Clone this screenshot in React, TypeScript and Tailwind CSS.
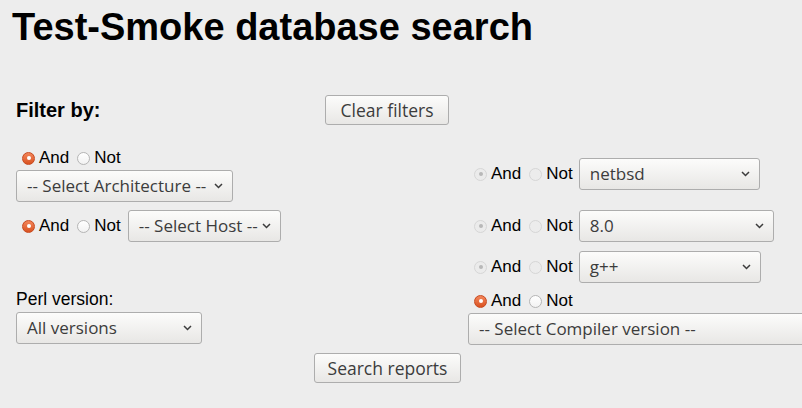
import React from "react";

type RadioState = "on" | "off" | "disabledOn" | "disabledOff";

function Radio({ state }: { state: RadioState }) {
  if (state === "on") {
    return (
      <span className="w-[13px] h-[13px] rounded-full border border-[#c7491f] bg-gradient-to-b from-[#f3865a] to-[#d9521f] flex items-center justify-center shrink-0">
        <span className="block w-[4px] h-[4px] rounded-full bg-white" />
      </span>
    );
  }
  if (state === "disabledOn") {
    return (
      <span className="w-[13px] h-[13px] rounded-full border border-[#d6d6d6] bg-[#ebebeb] flex items-center justify-center shrink-0">
        <span className="block w-[4px] h-[4px] rounded-full bg-[#b8b8b8]" />
      </span>
    );
  }
  if (state === "disabledOff") {
    return <span className="block w-[13px] h-[13px] rounded-full border border-[#d6d6d6] bg-[#ececec] shrink-0" />;
  }
  return <span className="block w-[13px] h-[13px] rounded-full border border-[#b5b5b5] bg-gradient-to-b from-white to-[#f2f2f2] shrink-0" />;
}

function AndNot({ disabled = false }: { disabled?: boolean }) {
  return (
    <div className="flex items-center text-[17px] text-black shrink-0">
      <span className="ml-[6px] mr-[4px]">
        <Radio state={disabled ? "disabledOn" : "on"} />
      </span>
      <span>And</span>
      <span className="ml-[8px] mr-[4px]">
        <Radio state={disabled ? "disabledOff" : "off"} />
      </span>
      <span>Not</span>
    </div>
  );
}

function Chevron() {
  return (
    <svg width="9" height="6" viewBox="0 0 9 6" className="shrink-0">
      <polyline points="1,1 4.5,4.5 8,1" fill="none" stroke="#3c3c3c" strokeWidth="1.5" />
    </svg>
  );
}

function Select({ label, width, className = "" }: { label: string; width: string; className?: string }) {
  return (
    <div
      className={`${width} h-[32px] shrink-0 flex items-center justify-between pl-[10px] pr-[9px] rounded-[3px] border border-[#adadad] bg-gradient-to-b from-[#fcfcfb] to-[#e8e7e5] text-[#3c3c3c] text-[17px] font-['Open_Sans',sans-serif] ${className}`}
    >
      <span className="whitespace-nowrap">{label}</span>
      <Chevron />
    </div>
  );
}

function Button({ label, width }: { label: string; width: string }) {
  return (
    <div
      className={`${width} h-[30px] shrink-0 flex items-center justify-center rounded-[3px] border border-[#adadad] bg-gradient-to-b from-[#fcfcfb] to-[#e8e7e5] text-[#3c3c3c] text-[17.5px] font-['Open_Sans',sans-serif]`}
    >
      {label}
    </div>
  );
}

export default function App() {
  return (
    <div className="w-[802px] h-[408px] overflow-hidden bg-[#ededed] font-['Liberation_Sans',Arial,sans-serif] text-black">
      <h1 className="ml-[12px] pt-[5px] text-[38px] leading-[44px] font-bold">Test-Smoke database search</h1>

      {/* Filter header */}
      <div className="flex items-center mt-[46px] ml-[16px]">
        <div className="w-[309px] text-[20px] font-bold">Filter by:</div>
        <Button label="Clear filters" width="w-[124px]" />
      </div>

      <div className="flex ml-[16px] mt-[24px]">
        {/* left column */}
        <div className="w-[452px] shrink-0 flex flex-col">
          <div className="h-[18px] flex items-center">
            <AndNot />
          </div>
          <Select label="-- Select Architecture --" width="w-[217px]" className="mt-[3px]" />
          <div className="flex items-center mt-[8px]">
            <AndNot />
            <Select label="-- Select Host --" width="w-[153px]" className="ml-[7px]" />
          </div>
          <div className="mt-[47px] text-[17.5px] leading-[20px]">Perl version:</div>
          <Select label="All versions" width="w-[186px]" className="mt-[3px]" />
        </div>

        {/* right column */}
        <div className="flex flex-col pt-[9px] shrink-0">
          <div className="flex items-center">
            <AndNot disabled />
            <Select label="netbsd" width="w-[181px]" className="ml-[6px]" />
          </div>
          <div className="flex items-center mt-[20px]">
            <AndNot disabled />
            <Select label="8.0" width="w-[195px]" className="ml-[6px]" />
          </div>
          <div className="flex items-center mt-[9px]">
            <AndNot disabled />
            <Select label="g++" width="w-[182px]" className="ml-[6px]" />
          </div>
          <div className="h-[18px] flex items-center mt-[9px]">
            <AndNot />
          </div>
          <Select label="-- Select Compiler version --" width="w-[360px]" className="mt-[3px]" />
        </div>
      </div>

      <div className="ml-[314px] mt-[8px]">
        <Button label="Search reports" width="w-[147px]" />
      </div>
    </div>
  );
}
